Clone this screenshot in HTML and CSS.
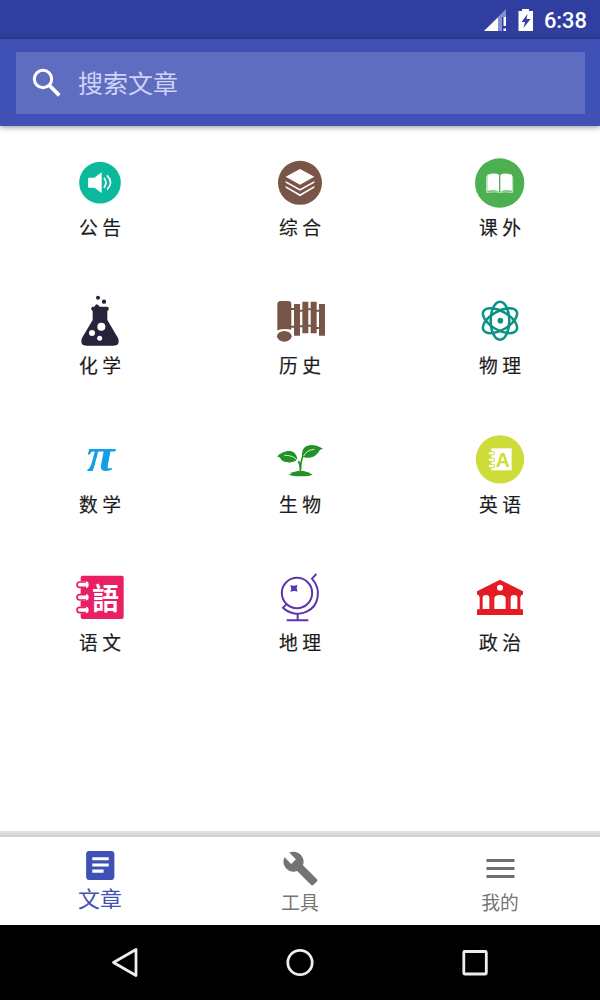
FILE: index.html
```html
<!DOCTYPE html>
<html lang="zh-CN">
<head>
<meta charset="utf-8">
<title>文章</title>
<link rel="stylesheet" href="styles.css">
</head>
<body>
<div class="screen">
  <div class="status">
    <svg class="signal" viewBox="0 0 24 24"><path d="M0 23L22 1v8h-4v14z" fill="#8590ce"/><path d="M0 23L14 9.5V23z" fill="#fff"/><path d="M19.500 9H22v9h-2.500zM19.500 20.500H22V23h-2.500z" fill="#fff"/></svg>
    <svg class="battery" viewBox="0 0 16 24"><path d="M4 1h7v2h4v20H.500V3H4z" fill="#fff"/><path d="M9.500 6L3.500 14H7L5.500 20l7-9H8.500z" fill="#303f9f"/></svg>
    <span class="time">6:38</span>
  </div>
  <header class="toolbar">
    <div class="search">
      <svg class="search-icon" viewBox="0 0 30 30"><circle cx="11" cy="11" r="8.700" fill="none" stroke="#fff" stroke-width="3"/><path d="M17 17L27.300 27.300" stroke="#fff" stroke-width="3.800"/></svg>
      <span class="hint">搜索文章</span>
    </div>
  </header>
  <main class="grid">
    <div class="item">
      <svg class="icon" viewBox="45 39 150 150"><circle cx="120" cy="113" r="62.500" fill="#0bb99c"/><path d="M87 98h16l22-16v62l-22-16H87q-3 0-3-3v-24q0-3 3-3z" fill="#fff"/><path d="M132 98q11 15 0 30M141 91q21 22 0 43" fill="none" stroke="#fff" stroke-width="5"/></svg>
      <span class="label">公 告</span>
    </div>
    <div class="item">
      <svg class="icon" viewBox="645 39 150 150"><circle cx="720" cy="113.500" r="66" fill="#795548"/><path d="M720 72l43 23-43 24-43-24z" fill="#fff"/><path d="M677 108v5l43 24 43-24v-5l-43 24zM677 123v5l43 26 43-26v-5l-43 25z" fill="#fff"/></svg>
      <span class="label">综 合</span>
    </div>
    <div class="item">
      <svg class="icon" viewBox="105 39 150 150"><circle cx="179" cy="114" r="74" fill="#4caf50"/><path d="M142 89q22-7 35 0v51q-15-7-35-2zM181 89q14-7 35 0v49q-20-5-35 2z" fill="#fff"/><path d="M140 94v48q25-3 39 0 14-3 39 0V94" fill="none" stroke="#e8f5e9" stroke-width="2.500"/></svg>
      <span class="label">课 外</span>
    </div>
    <div class="item">
      <svg class="icon" viewBox="45 34 150 150"><g fill="#26243a"><circle cx="114" cy="39" r="6"/><circle cx="132" cy="51" r="6.500"/><path d="M98 66h5q7-15 16 0h23a7 7 0 0 1 0 13v27l32 54q9 23-15 23H81q-24 0-15-23l32-54V79a7 7 0 0 1 0-13z"/></g><g fill="#fff"><circle cx="124" cy="126" r="12"/><circle cx="96" cy="145" r="9"/><circle cx="119" cy="161" r="7.500"/></g></svg>
      <span class="label">化 学</span>
    </div>
    <div class="item">
      <svg class="icon" viewBox="645 34 150 150"><g fill="#795548"><path d="M652 59q0-10 10-10h23q9 0 9 10v76q-21-5-42 2z"/><ellipse cx="673" cy="155" rx="22" ry="16"/><path d="M702 58h18v95h-18zM727 51h18v95h-18zM752 51h18v95h-18zM777 58h18v95h-18zM692 70h10v6h-10zM692 123h10v6h-10zM720 75h7v6h-7zM720 122h7v6h-7zM745 71h7v6h-7zM745 120h7v6h-7zM770 75h7v6h-7zM770 127h7v6h-7z"/></g></svg>
      <span class="label">历 史</span>
    </div>
    <div class="item">
      <svg class="icon" viewBox="105 34 150 150"><g fill="none" stroke="#0a9385" stroke-width="7.500"><ellipse cx="180" cy="108" rx="28" ry="57"/><ellipse cx="180" cy="108" rx="28" ry="57" transform="rotate(60 180 108)"/><ellipse cx="180" cy="108" rx="28" ry="57" transform="rotate(-60 180 108)"/></g><circle cx="181" cy="108" r="8.500" fill="#0a9385"/></svg>
      <span class="label">物 理</span>
    </div>
    <div class="item">
      <svg class="icon" viewBox="45 29 150 150"><text class="pi" x="80" y="137" textLength="84" lengthAdjust="spacingAndGlyphs">π</text></svg>
      <span class="label">数 学</span>
    </div>
    <div class="item">
      <svg class="icon" viewBox="645 29 150 150"><g fill="#229225"><path d="M651 94c18-20 57-28 61 8l-3 3c-14 11-44 7-48-7-2-3-6-4-10-4zM726 95c-3-45 37-41 63-25-14 2-12 14-24 21-11 7-25 9-35 3z"/><path d="M687 148q10-9 26-11h18q16 3 27 11-12 5-35 5t-36-5z"/></g><path d="M721 140q1-21-6-33M722 130q0-23 7-38" fill="none" stroke="#229225" stroke-width="5"/><path d="M673 90q28-1 40 17M731 92q9-18 32-20" fill="none" stroke="#fff" stroke-width="2.500"/></svg>
      <span class="label">生 物</span>
    </div>
    <div class="item">
      <svg class="icon" viewBox="105 29 150 150"><circle cx="180" cy="102" r="72.500" fill="#cddc39"/><path d="M154 69h61v66h-61z" fill="#fff"/><g class="rings-lime"><rect x="145" y="79" width="19" height="10" rx="5"/><rect x="145" y="98" width="19" height="10" rx="5"/><rect x="145" y="117" width="19" height="10" rx="5"/></g><text class="letter-a" x="188" y="124">A</text></svg>
      <span class="label">英 语</span>
    </div>
    <div class="item">
      <svg class="icon" viewBox="45 24 150 150"><rect x="62" y="32" width="129" height="130" rx="6" fill="#e91e63"/><g fill="#fff"><rect x="54" y="49" width="32" height="20" rx="10"/><rect x="54" y="87" width="32" height="20" rx="10"/><rect x="54" y="125" width="32" height="20" rx="10"/></g><path class="rings-pink" d="M78 51H59a8 8 0 0 0 0 16h19M78 89H59a8 8 0 0 0 0 16h19M78 127H59a8 8 0 0 0 0 16h19"/><text class="letter-yu" x="137" y="133" textLength="80" lengthAdjust="spacingAndGlyphs">語</text></svg>
      <span class="label">语 文</span>
    </div>
    <div class="item">
      <svg class="icon" viewBox="645 24 150 150"><g fill="none" stroke="#5d35ad" stroke-width="6"><circle cx="711" cy="84" r="45.500"/><path d="M769 27l-13 14c31 34 19 84-16 99-22 11-51 7-71-12l10-10M713 146v20M680 166h65"/></g><path d="M691 60q10 5 21-1-4 11 0 21-10-4-21 1 5-10 0-21z" fill="#5d35ad"/></svg>
      <span class="label">地 理</span>
    </div>
    <div class="item">
      <svg class="icon" viewBox="105 24 150 150"><path d="M111 79L180 44l69 35v10h-4l-4 7v37h8v17H111v-17h8V96l-4-7h-4z" fill="#e31b23"/><g fill="#fff"><circle cx="180" cy="68" r="9"/><path d="M128 132V98q0-8 10-8t10 8v34zM163 132V101q0-11 17-11t17 11v31zM212 132V98q0-8 10-8t10 8v34z"/></g><path d="M156 95v38M205 95v38" stroke="#f26b70" stroke-width="1"/></svg>
      <span class="label">政 治</span>
    </div>
  </main>
  <div class="divider"></div>
  <nav class="tabs">
    <div class="tab active">
      <svg class="tab-icon" viewBox="0 0 36 36"><rect x="4" y="4" width="27.500" height="28" rx="3" fill="#3f51b5"/><path d="M10 10h16v3H10zM10 16h16v3H10zM10 22h11v3H10z" fill="#fff"/></svg>
      <span class="tab-label">文章</span>
    </div>
    <div class="tab">
      <svg class="tab-icon" viewBox="0 0 24 24"><path fill="#737373" d="M22.700 19l-9.100-9.100c.9-2.300.4-5-1.500-6.900-2-2-5-2.400-7.400-1.300L9 6 6 9 1.600 4.700C.4 7.100.9 10.100 2.900 12.100c1.900 1.900 4.600 2.400 6.900 1.500l9.100 9.100c.4.4 1 .4 1.400 0l2.300-2.300c.5-.4.5-1.100.1-1.400z"/></svg>
      <span class="tab-label">工具</span>
    </div>
    <div class="tab">
      <svg class="tab-icon" viewBox="0 0 37 37"><path d="M4.500 9h28v3h-28zM4.500 17h28v3h-28zM4.500 25h28v3h-28z" fill="#6e6e6e"/></svg>
      <span class="tab-label">我的</span>
    </div>
  </nav>
  <div class="navbar">
    <svg class="key" viewBox="0 0 34 34"><path d="M5.500 16.500L28 3.500v26z" fill="none" stroke="#eee" stroke-width="2.800" stroke-linejoin="round"/></svg>
    <svg class="key" viewBox="0 0 34 34"><circle cx="17" cy="16.500" r="12.200" fill="none" stroke="#eee" stroke-width="2.800"/></svg>
    <svg class="key" viewBox="0 0 34 34"><rect x="5.800" y="5.500" width="22.500" height="22.500" rx="1" fill="none" stroke="#eee" stroke-width="2.800"/></svg>
  </div>
</div>
</body>
</html>
```
FILE: styles.css
```css
* { box-sizing: border-box; }
body {
  margin: 0;
  background: #fff;
  font-family: Roboto, "Noto Sans CJK SC", sans-serif;
}
svg { display: block; flex: none; }
.screen {
  width: 600px;
  height: 1000px;
  display: flex;
  flex-direction: column;
  overflow: hidden;
}
.status {
  height: 39px;
  flex: none;
  background: #303f9f;
  display: flex;
  align-items: center;
  justify-content: flex-end;
  padding-right: 13px;
}
.signal { width: 24px; height: 24px; margin-right: 10px; }
.battery { width: 16px; height: 24px; margin-right: 10px; }
.time {
  color: #fff;
  font-size: 21.900px;
  font-weight: 500;
  line-height: 39px;
  padding-top: 2px;
}
.toolbar {
  height: 87px;
  flex: none;
  background: #3f51b5;
  padding: 12.500px 15.500px;
  box-shadow: 0 1px 6px rgba(0, 0, 0, .45);
}
.search {
  height: 62px;
  background: #5f6dc1;
  display: flex;
  align-items: center;
  padding-left: 16px;
}
.search-icon { width: 30px; height: 30px; margin-right: 16.500px; }
.hint {
  color: #cfd4f6;
  font-size: 25px;
  line-height: 36px;
  padding-top: 4px;
}
.grid {
  flex: 1;
  min-height: 0;
  padding-top: 32px;
  display: grid;
  grid-template-columns: repeat(3, 1fr);
  grid-auto-rows: 138.330px;
  align-content: start;
}
.item {
  display: flex;
  flex-direction: column;
  align-items: center;
}
.icon { width: 50px; height: 50px; overflow: visible; }
.label {
  margin-top: 9px;
  color: #1c1c1c;
  font-size: 18.750px;
  line-height: 24px;
  white-space: pre;
  -webkit-text-stroke: .2px #1c1c1c;
}
.pi {
  font: italic bold 144px "Liberation Serif", serif;
  fill: #109fe8;
}
.letter-a {
  font: bold 58px "Liberation Sans", sans-serif;
  fill: #cddc39;
  text-anchor: middle;
}
.letter-yu {
  font: bold 88px "Noto Sans CJK TC", sans-serif;
  fill: #fff;
  text-anchor: middle;
}
.rings-lime { fill: #fff; stroke: #cddc39; stroke-width: 3px; }
.rings-pink { fill: #fff; stroke: #e91e63; stroke-width: 5px; }
.divider {
  height: 6px;
  flex: none;
  background: linear-gradient(#e2e2e2, #d0d0d0);
}
.tabs {
  height: 88px;
  flex: none;
  display: flex;
  background: #fff;
}
.tab {
  flex: 1;
  display: flex;
  flex-direction: column;
  align-items: center;
  padding-top: 13px;
  color: #757575;
}
.tab-icon { width: 37px; height: 37px; }
.tab-label { font-size: 18.750px; line-height: 28px; margin-top: 3px; }
.active { color: #3f51b5; padding-top: 10px; }
.active .tab-label { font-size: 21.900px; margin-top: 2px; }
.navbar {
  height: 75px;
  flex: none;
  background: #000;
  display: flex;
  justify-content: center;
  align-items: center;
  gap: 141px;
}
.key { width: 34px; height: 34px; }
```
